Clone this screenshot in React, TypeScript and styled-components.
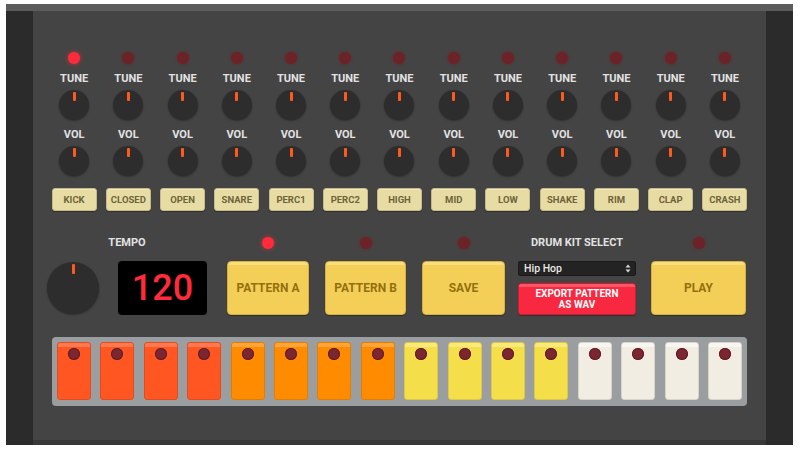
import React from "react";
import styled, { createGlobalStyle } from "styled-components";

const GlobalStyle = createGlobalStyle`
  html, body {
    margin: 0;
    padding: 0;
    background: #ffffff;
  }
  body {
    font-family: Roboto, "Liberation Sans", Arial, sans-serif;
  }
  button {
    font-family: inherit;
    cursor: pointer;
  }
`;

const Page = styled.div`
  width: 800px;
  height: 452px;
  box-sizing: border-box;
  padding: 4px 7px 7px 6px;
  background: #ffffff;
`;

const Machine = styled.div`
  height: 441px;
  display: flex;
  flex-direction: column;
`;

const TopRail = styled.div`
  height: 7px;
  background: #5c5c5c;
`;

const Body = styled.div`
  flex: 1;
  display: flex;
`;

const SideRail = styled.div`
  width: 27px;
  background: #2a2b2a;
`;

const Panel = styled.div`
  flex: 1;
  background: #454444;
  border-bottom: 5px solid #393838;
  padding: 41px 14px 0;
`;

/* ---------- instrument channels ---------- */

const Channels = styled.div`
  display: grid;
  grid-template-columns: repeat(13, 1fr);
`;

const Channel = styled.div`
  display: flex;
  flex-direction: column;
  align-items: center;
`;

const Led = styled.div<{ $on?: boolean }>`
  width: 12px;
  height: 12px;
  border-radius: 50%;
  background: ${(p) => (p.$on ? "#ff2a3c" : "#6c2327")};
  box-shadow: ${(p) =>
    p.$on
      ? "0 0 4px rgba(255, 45, 60, 0.7)"
      : "0 0 3px rgba(110, 30, 35, 0.8)"};
`;

const ChannelLed = styled(Led)`
  margin-bottom: 8px;
`;

const Label = styled.div`
  font-size: 11px;
  line-height: 13px;
  height: 13px;
  font-weight: 700;
  color: #e2e2e2;
  white-space: nowrap;
`;

const Knob = styled.div<{ $size: number; $mark: number }>`
  position: relative;
  flex: none;
  width: ${(p) => p.$size}px;
  height: ${(p) => p.$size}px;
  border-radius: 50%;
  background: #2e2d2d;
  box-shadow: 0 1px 2px rgba(0, 0, 0, 0.35);

  &::after {
    content: "";
    position: absolute;
    left: 50%;
    top: 2px;
    width: 3px;
    height: ${(p) => p.$mark}px;
    margin-left: -1.5px;
    border-radius: 1px;
    background: #ff5a1e;
  }
`;

const ChannelKnob = styled(Knob)<{ $top: number }>`
  margin-top: ${(p) => p.$top}px;
`;

const ChannelLabel = styled(Label)<{ $top: number }>`
  margin-top: ${(p) => p.$top}px;
`;

const NameButton = styled.button`
  width: 45px;
  height: 23px;
  margin-top: 12px;
  padding: 0;
  box-sizing: border-box;
  border-radius: 3px;
  border: 1px solid #c7bb85;
  background: #e7dda4;
  color: #6e6339;
  font-size: 9.5px;
  font-weight: 700;
  box-shadow: inset 0 1px 0 rgba(255, 255, 255, 0.35),
    0 1px 1px rgba(0, 0, 0, 0.3);
`;

/* ---------- transport row ---------- */

const Controls = styled.div`
  display: flex;
  align-items: flex-start;
  margin-top: 25px;
`;

const Group = styled.div<{ $offset?: number }>`
  display: flex;
  flex-direction: column;
  align-items: center;
  gap: 12px;
  margin-left: ${(p) => p.$offset ?? 0}px;
`;

const Header = styled.div`
  height: 13px;
  display: flex;
  align-items: center;
  justify-content: center;
`;

const TempoRow = styled.div`
  display: flex;
  align-items: center;
  gap: 19px;
  height: 54px;
`;

const Display = styled.div`
  width: 89px;
  height: 54px;
  border-radius: 4px;
  background: #000000;
  color: #ff2a3c;
  font-size: 36px;
  font-weight: 500;
  display: flex;
  align-items: center;
  justify-content: center;
`;

const BigButton = styled.button<{ $w: number }>`
  width: ${(p) => p.$w}px;
  height: 54px;
  padding: 0;
  box-sizing: border-box;
  border-radius: 4px;
  border: 1px solid #d6b040;
  background: linear-gradient(#f8df7c 0, #f8df7c 3px, #f3cf57 3px);
  color: #93700f;
  font-size: 12px;
  font-weight: 700;
  box-shadow: 0 1px 1px rgba(0, 0, 0, 0.3);
`;

const KitStack = styled.div`
  width: 118px;
  height: 54px;
  display: flex;
  flex-direction: column;
  gap: 7px;
`;

const KitSelect = styled.div`
  height: 15px;
  box-sizing: border-box;
  display: flex;
  align-items: center;
  justify-content: space-between;
  padding: 0 5px 0 6px;
  border-radius: 3px;
  background: #232323;
  box-shadow: inset 0 0 0 1px #1b1b1b;
  color: #e8e8e8;
  font-size: 10.5px;
  font-weight: 500;
`;

const ExportButton = styled.button`
  height: 32px;
  padding: 0;
  box-sizing: border-box;
  border-radius: 3px;
  border: 1px solid #c91d30;
  background: linear-gradient(#ff5566 0, #ff5566 3px, #f7283f 3px);
  color: #ffffff;
  font-size: 10px;
  line-height: 11.5px;
  font-weight: 700;
  box-shadow: 0 1px 1px rgba(0, 0, 0, 0.3);
`;

/* ---------- step sequencer ---------- */

const Sequencer = styled.div`
  margin: 22px 5px 0;
  padding: 5px 5px 6px;
  border-radius: 4px;
  background: #9b9ea1;
  display: grid;
  grid-template-columns: repeat(16, 1fr);
  column-gap: 9.4px;
`;

type Tone = "red" | "orange" | "yellow" | "cream";

const toneColors: Record<Tone, [string, string, string]> = {
  red: ["#ff5622", "#ff7a50", "#e44c1d"],
  orange: ["#ff8b00", "#ffa53c", "#e57d00"],
  yellow: ["#f4df4b", "#f8e97f", "#dcc843"],
  cream: ["#f2ede2", "#f8f6f1", "#d9d4ca"],
};

const Step = styled.button<{ $tone: Tone }>`
  position: relative;
  height: 58px;
  padding: 0;
  box-sizing: border-box;
  border-radius: 3px;
  border: 1px solid ${(p) => toneColors[p.$tone][2]};
  background: linear-gradient(
    ${(p) => toneColors[p.$tone][1]} 0,
    ${(p) => toneColors[p.$tone][1]} 4px,
    ${(p) => toneColors[p.$tone][0]} 4px
  );
`;

const StepDot = styled.span`
  position: absolute;
  top: 5px;
  left: 50%;
  width: 12px;
  height: 12px;
  margin-left: -6px;
  border-radius: 50%;
  background: #7b2630;
  box-shadow: inset 0 0 0 1px #641c25;
`;

const channels = [
  "KICK",
  "CLOSED",
  "OPEN",
  "SNARE",
  "PERC1",
  "PERC2",
  "HIGH",
  "MID",
  "LOW",
  "SHAKE",
  "RIM",
  "CLAP",
  "CRASH",
];

const steps: Tone[] = [
  ...Array<Tone>(4).fill("red"),
  ...Array<Tone>(4).fill("orange"),
  ...Array<Tone>(4).fill("yellow"),
  ...Array<Tone>(4).fill("cream"),
];

function SelectArrows() {
  return (
    <svg width="6" height="9" viewBox="0 0 6 9">
      <path d="M3 0.5 L5.5 3.5 H0.5 Z" fill="#d8d8d8" />
      <path d="M3 8.5 L5.5 5.5 H0.5 Z" fill="#d8d8d8" />
    </svg>
  );
}

export default function App() {
  return (
    <Page>
      <GlobalStyle />
      <Machine>
        <TopRail />
        <Body>
          <SideRail />
          <Panel>
            <Channels>
              {channels.map((name, i) => (
                <Channel key={name}>
                  <ChannelLed $on={i === 0} />
                  <Label>TUNE</Label>
                  <ChannelKnob $size={30} $mark={9} $top={5} />
                  <ChannelLabel $top={8}>VOL</ChannelLabel>
                  <ChannelKnob $size={30} $mark={9} $top={5} />
                  <NameButton>{name}</NameButton>
                </Channel>
              ))}
            </Channels>

            <Controls>
              <Group>
                <Header>
                  <Label>TEMPO</Label>
                </Header>
                <TempoRow>
                  <Knob $size={52} $mark={10} />
                  <Display>120</Display>
                </TempoRow>
              </Group>
              <Group $offset={20}>
                <Header>
                  <Led $on />
                </Header>
                <BigButton $w={82}>PATTERN A</BigButton>
              </Group>
              <Group $offset={16}>
                <Header>
                  <Led />
                </Header>
                <BigButton $w={81}>PATTERN B</BigButton>
              </Group>
              <Group $offset={16}>
                <Header>
                  <Led />
                </Header>
                <BigButton $w={83}>SAVE</BigButton>
              </Group>
              <Group $offset={13}>
                <Header>
                  <Label>DRUM KIT SELECT</Label>
                </Header>
                <KitStack>
                  <KitSelect>
                    <span>Hip Hop</span>
                    <SelectArrows />
                  </KitSelect>
                  <ExportButton>
                    EXPORT PATTERN
                    <br />
                    AS WAV
                  </ExportButton>
                </KitStack>
              </Group>
              <Group $offset={15}>
                <Header>
                  <Led />
                </Header>
                <BigButton $w={95}>PLAY</BigButton>
              </Group>
            </Controls>

            <Sequencer>
              {steps.map((tone, i) => (
                <Step key={i} $tone={tone}>
                  <StepDot />
                </Step>
              ))}
            </Sequencer>
          </Panel>
          <SideRail />
        </Body>
      </Machine>
    </Page>
  );
}
